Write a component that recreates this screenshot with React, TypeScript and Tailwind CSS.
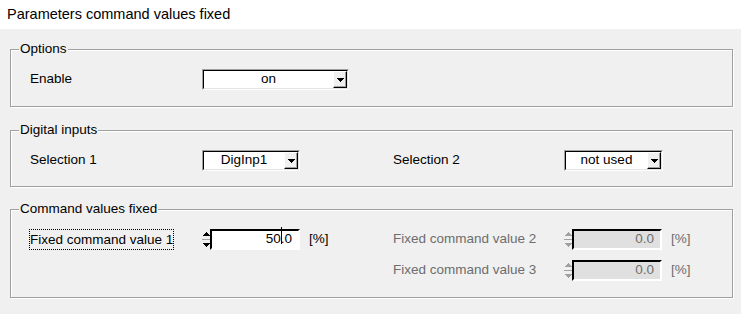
import React from "react";

const Tri = ({ up = false, color = "#000" }: { up?: boolean; color?: string }) => (
  <svg width="7" height="4" viewBox="0 0 7 4" shapeRendering="crispEdges">
    <path d={up ? "M3 0h1v1h1v1h1v1h1v1H0V3h1V2h1V1h1z" : "M0 0h7v1H6v1H5v1H4v1H3V3H2V2H1V1H0z"} fill={color} />
  </svg>
);

const Combo = ({ value, className }: { value: string; className: string }) => (
  <div className={`flex h-[21px] border border-t-[#a0a0a0] border-l-[#a0a0a0] border-r-white border-b-white ${className}`}>
    <div className="flex flex-1 border border-t-[#000] border-l-[#000] border-r-[#e3e3e3] border-b-[#e3e3e3] bg-white">
      <div className="flex flex-1 items-center justify-center text-[13.5px] text-black">{value}</div>
      <div className="flex w-[14px] items-center justify-center border border-t-white border-l-white border-r-[#000] border-b-[#000] bg-[#f0f0f0] shadow-[inset_-1px_-1px_0_#a0a0a0]">
        <Tri />
      </div>
    </div>
  </div>
);

const Spin = ({ value, disabled = false, caret = false }: { value: string; disabled?: boolean; caret?: boolean }) => {
  const c = disabled ? "#a0a0a0" : "#000";
  return (
    <div className="flex h-[21px] items-stretch">
      <div className="flex w-[8px] flex-col">
        <div className="flex flex-1 items-center justify-center border-b border-[#a0a0a0] bg-[#f0f0f0]">
          <Tri up color={c} />
        </div>
        <div className="flex flex-1 items-center justify-center bg-[#f0f0f0]">
          <Tri color={c} />
        </div>
      </div>
      <div className={`flex w-[90px] items-center justify-end border-2 border-t-[#000] border-l-[#000] border-r-white border-b-white pr-[6px] text-[13.5px] ${disabled ? "bg-[#e0e0e0] text-[#6d6d6d]" : "bg-white text-black"}`}>
        {caret ? (
          <span className="relative">
            50<span className="absolute left-[15px] top-[-2px] h-[17px] w-px bg-black" />.0
          </span>
        ) : (
          value
        )}
      </div>
      <div className={`ml-[9px] flex items-center text-[13.5px] ${disabled ? "text-[#6d6d6d]" : "text-black"}`}>[%]</div>
    </div>
  );
};

const Group = ({ title, className, children }: { title: string; className: string; children: React.ReactNode }) => (
  <div className={`relative ml-[10px] mr-[8px] border border-[#a0a0a0] shadow-[inset_1px_1px_0_#fff,1px_1px_0_#fff] ${className}`}>
    <div className="absolute left-[8px] top-[-9px] bg-[#f0f0f0] px-[1px] text-[13.5px] leading-[16px] text-black">{title}</div>
    {children}
  </div>
);

export default function App() {
  return (
    <div className="flex h-[314px] w-[741px] flex-col bg-[#f0f0f0] font-['Liberation_Sans',Arial,sans-serif]">
      <div className="flex h-[29px] items-center bg-white px-[7px] text-[14.5px] text-black">Parameters command values fixed</div>

      <Group title="Options" className="mt-[20px] h-[58px] pl-[19px] pt-[19px]">
        <div className="flex items-center">
          <div className="w-[172px] text-[13.5px] text-black">Enable</div>
          <Combo value="on" className="w-[147px]" />
        </div>
      </Group>

      <Group title="Digital inputs" className="mt-[23px] h-[57px] pl-[19px] pt-[19px]">
        <div className="flex items-center">
          <div className="w-[172px] text-[13.5px] text-black">Selection 1</div>
          <div className="w-[191px]">
            <Combo value="DigInp1" className="w-[98px]" />
          </div>
          <div className="w-[171px] text-[13.5px] text-black">Selection 2</div>
          <Combo value="not used" className="w-[99px]" />
        </div>
      </Group>

      <Group title="Command values fixed" className="mt-[22px] h-[89px] pl-[19px] pt-[19px]">
        <div className="grid grid-cols-[172px_191px_171px_auto] items-center gap-y-[10px]">
          <div className="flex">
            <span className="-ml-[1px] border border-dotted border-black text-[13.5px] leading-[19px] text-black">Fixed command value 1</span>
          </div>
          <Spin value="50.0" caret />
          <div className="text-[13.5px] text-[#6d6d6d]">Fixed command value 2</div>
          <Spin value="0.0" disabled />
          <div />
          <div />
          <div className="text-[13.5px] text-[#6d6d6d]">Fixed command value 3</div>
          <Spin value="0.0" disabled />
        </div>
      </Group>
    </div>
  );
}
